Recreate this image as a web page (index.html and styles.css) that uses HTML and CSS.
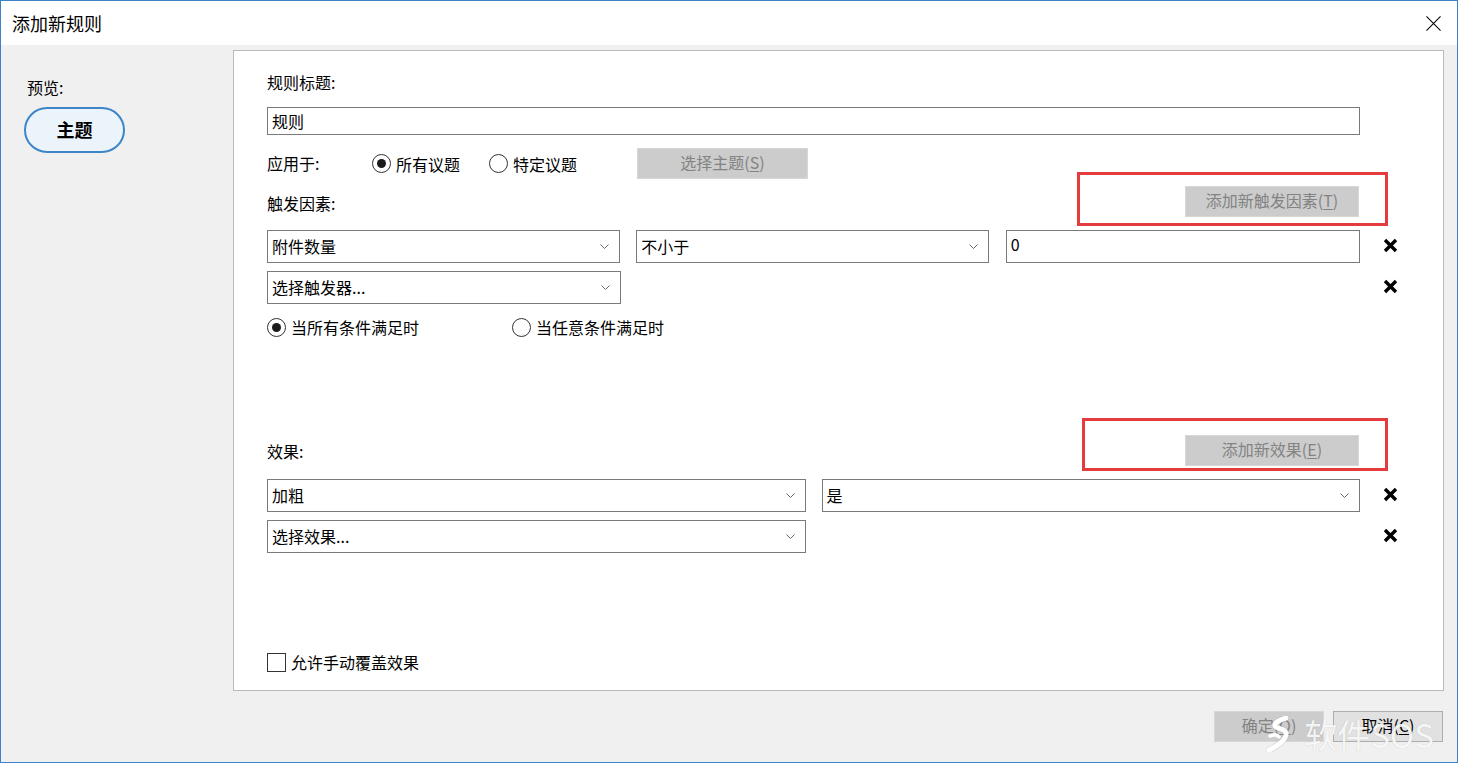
FILE: index.html
```html
<!DOCTYPE html>
<html>
<head>
    <meta charset="utf-8"/>
    <title>添加新规则</title>
    <link rel="stylesheet" href="styles.css">
</head>
<body>
<div class="window">
    <div class="titlebar">
        <span class="title">添加新规则</span>
        <svg class="close" width="16" height="16" viewBox="0 0 16 16">
            <path d="M0.5 0.5L15.5 15.5M15.5 0.5L0.5 15.5" stroke="#000" stroke-width="1.1" fill="none"/>
        </svg>
    </div>

    <div class="client">
        <div class="content">
            <!-- preview column -->
            <div class="preview">
                <div class="preview-label">预览:</div>
                <div class="topic">主题</div>
            </div>

            <!-- rule editor -->
            <div class="panel">
                <div class="label rule-title">规则标题:</div>
                <div class="textbox title-box">规则</div>

                <div class="apply-row">
                    <span class="apply-label">应用于:</span>
                    <span class="opt opt-all"><span class="radio checked"></span>所有议题</span>
                    <span class="opt opt-some"><span class="radio"></span>特定议题</span>
                    <button class="btn disabled pick">选择主题(<u>S</u>)</button>
                </div>

                <div class="section-head trigger-head">
                    <span class="label">触发因素:</span>
                    <div class="highlight">
                        <button class="btn disabled add">添加新触发因素(<u>T</u>)</button>
                    </div>
                </div>

                <div class="row first-row">
                    <div class="fields">
                        <div class="select col-a">附件数量
                            <svg class="chev" width="9" height="5" viewBox="0 0 9 5"><path d="M0.5 0.5L4.5 4.5L8.5 0.5" stroke="#666" fill="none"/></svg>
                        </div>
                        <div class="select col-b">不小于
                            <svg class="chev" width="9" height="5" viewBox="0 0 9 5"><path d="M0.5 0.5L4.5 4.5L8.5 0.5" stroke="#666" fill="none"/></svg>
                        </div>
                        <div class="textbox col-c">0</div>
                    </div>
                    <div class="del"><svg width="15" height="15" viewBox="0 0 15 15"><path d="M2 2L13 13M13 2L2 13" stroke="#000" stroke-width="3.4"/></svg></div>
                </div>
                <div class="row">
                    <div class="fields">
                        <div class="select col-a">选择触发器...
                            <svg class="chev" width="9" height="5" viewBox="0 0 9 5"><path d="M0.5 0.5L4.5 4.5L8.5 0.5" stroke="#666" fill="none"/></svg>
                        </div>
                    </div>
                    <div class="del"><svg width="15" height="15" viewBox="0 0 15 15"><path d="M2 2L13 13M13 2L2 13" stroke="#000" stroke-width="3.4"/></svg></div>
                </div>

                <div class="cond-row">
                    <span class="opt opt-any"><span class="radio checked"></span>当所有条件满足时</span>
                    <span class="opt"><span class="radio"></span>当任意条件满足时</span>
                </div>

                <div class="section-head effect-head">
                    <span class="label">效果:</span>
                    <div class="highlight">
                        <button class="btn disabled add">添加新效果(<u>E</u>)</button>
                    </div>
                </div>

                <div class="row first-row">
                    <div class="fields">
                        <div class="select col-wide">加粗
                            <svg class="chev" width="9" height="5" viewBox="0 0 9 5"><path d="M0.5 0.5L4.5 4.5L8.5 0.5" stroke="#666" fill="none"/></svg>
                        </div>
                        <div class="select col-wide">是
                            <svg class="chev" width="9" height="5" viewBox="0 0 9 5"><path d="M0.5 0.5L4.5 4.5L8.5 0.5" stroke="#666" fill="none"/></svg>
                        </div>
                    </div>
                    <div class="del"><svg width="15" height="15" viewBox="0 0 15 15"><path d="M2 2L13 13M13 2L2 13" stroke="#000" stroke-width="3.4"/></svg></div>
                </div>
                <div class="row">
                    <div class="fields">
                        <div class="select col-wide">选择效果...
                            <svg class="chev" width="9" height="5" viewBox="0 0 9 5"><path d="M0.5 0.5L4.5 4.5L8.5 0.5" stroke="#666" fill="none"/></svg>
                        </div>
                    </div>
                    <div class="del"><svg width="15" height="15" viewBox="0 0 15 15"><path d="M2 2L13 13M13 2L2 13" stroke="#000" stroke-width="3.4"/></svg></div>
                </div>

                <div class="check-row">
                    <span class="checkbox"></span>允许手动覆盖效果
                </div>
            </div>
        </div>

        <div class="footer">
            <button class="btn disabled dlg">确定(<u>O</u>)</button>
            <button class="btn dlg">取消(<u>C</u>)</button>
        </div>
    </div>

    <div class="watermark">
        <svg class="wm-logo" width="26" height="36" viewBox="0 0 26 36">
            <path d="M20 2C13 4 8 7 9 10C10 13 19 12 20 17C21 23 12 30 3 34" stroke="rgba(0,0,0,0.08)" stroke-width="6.5" fill="none" stroke-linecap="round"/>
            <path d="M20 2C13 4 8 7 9 10C10 13 19 12 20 17C21 23 12 30 3 34" stroke="#fff" stroke-width="5" fill="none" stroke-linecap="round"/>
            <path d="M4 20C8 18 12 19 13 21" stroke="#fff" stroke-width="3.5" fill="none" stroke-linecap="round"/>
        </svg>
        <span class="wm-text">软件SOS</span>
    </div>
</div>
</body>
</html>
```

FILE: styles.css
```css
* {
    box-sizing: border-box;
}

body {
    margin: 0;
    font-family: "Noto Sans CJK SC", "Noto Sans", sans-serif;
    font-size: 16px;
    color: #000;
    background: #f0f0f0;
}

u {
    text-decoration: underline;
    text-underline-offset: 2px;
}

/* window frame */
.window {
    position: relative;
    width: 1458px;
    height: 763px;
    border: 1px solid #3c82c8;
    background: #f0f0f0;
    display: flex;
    flex-direction: column;
    overflow: hidden;
}

.titlebar {
    height: 44px;
    background: #fff;
    display: flex;
    align-items: center;
    justify-content: space-between;
    padding: 0 16px 0 11px;
}

.title {
    font-size: 18px;
    line-height: 20px;
}

.close {
    width: 15px;
    height: 15px;
}

.client {
    flex: 1;
    padding: 5px 13px 0 0;
}

.content {
    display: flex;
}

/* preview */
.preview {
    width: 232px;
}

.preview-label {
    margin: 27px 0 0 26px;
    line-height: 20px;
}

.topic {
    margin: 10px 0 0 23px;
    width: 101px;
    height: 46px;
    border: 2px solid #3d85c6;
    border-radius: 23px;
    background: #ebf3fb;
    display: flex;
    align-items: center;
    justify-content: center;
    padding-bottom: 2px;
    font-size: 18px;
    font-weight: bold;
}

/* panel */
.panel {
    width: 1211px;
    height: 641px;
    background: #fff;
    border: 1px solid #bababa;
    padding-left: 33px;
}

.label {
    line-height: 20px;
}

.rule-title {
    margin-top: 21px;
}

.textbox {
    border: 1px solid #7a7a7a;
    background: #fff;
    padding: 0 0 1px 4px;
    display: flex;
    align-items: center;
}

.title-box {
    margin-top: 15px;
    width: 1093px;
    height: 28px;
}

.apply-row {
    margin-top: 13px;
    height: 31px;
    display: flex;
    align-items: center;
}

.apply-label {
    width: 105px;
    padding-bottom: 2px;
}

.opt {
    display: flex;
    align-items: center;
    line-height: 20px;
}

.opt-all {
    width: 117px;
}

.opt-some {
    width: 148px;
}

.radio {
    width: 19px;
    height: 19px;
    border: 1px solid #333;
    border-radius: 50%;
    margin-right: 5px;
    display: flex;
    align-items: center;
    justify-content: center;
    background: #fff;
}

.radio.checked::after {
    content: "";
    width: 9px;
    height: 9px;
    border-radius: 50%;
    background: #1a1a1a;
}

.btn {
    height: 31px;
    font-family: inherit;
    font-size: 16px;
    line-height: 20px;
    border: 1px solid #adadad;
    background: #e1e1e1;
    color: #000;
    padding: 0 0 3px;
}

.btn.disabled {
    background: #cccccc;
    border-color: #d7d7d7;
    color: #838383;
}

.pick {
    width: 171px;
}

/* section heads with red markers */
.section-head {
    width: 1121px;
    display: flex;
    justify-content: space-between;
    align-items: flex-start;
}

.highlight {
    border: 3px solid #e43c3e;
    display: flex;
    justify-content: flex-end;
}

.add {
    width: 174px;
}

.trigger-head .label {
    margin-top: 14px;
}

.trigger-head .highlight {
    margin-top: -7px;
    width: 311px;
    height: 54px;
    padding: 11px 26px 0 0;
}

.effect-head {
    margin-top: 81px;
}

.effect-head .label {
    margin-top: 23px;
}

.effect-head .highlight {
    width: 306px;
    height: 53px;
    padding: 14px 26px 0 0;
}

/* rows */
.row {
    margin-top: 8px;
    display: flex;
    align-items: center;
}

.trigger-head + .first-row {
    margin-top: 4px;
}

.fields {
    width: 1093px;
    display: flex;
    gap: 16px;
}

.select {
    height: 33px;
    border: 1px solid #7a7a7a;
    background: #fff;
    padding: 0 10px 2px 4px;
    display: flex;
    align-items: center;
    justify-content: space-between;
}

.chev {
    margin-top: 2px;
}

.col-a {
    width: 354px;
}

.col-b {
    width: 353px;
}

.col-c {
    width: 355px;
    height: 33px;
    margin-left: 1px;
    padding-bottom: 5px;
}

.col-wide {
    width: 539px;
}

.del {
    width: 60px;
    display: flex;
    justify-content: center;
    padding-bottom: 3px;
}

.cond-row {
    margin-top: 13px;
    height: 20px;
    display: flex;
}

.opt-any {
    width: 245px;
}

.check-row {
    margin-top: 99px;
    display: flex;
    align-items: center;
    line-height: 20px;
}

.checkbox {
    width: 19px;
    height: 19px;
    border: 1px solid #333;
    background: #fff;
    margin-right: 5px;
}

/* dialog buttons */
.footer {
    display: flex;
    justify-content: flex-end;
    gap: 9px;
    padding: 20px 1px 0 0;
}

.dlg {
    width: 110px;
}

/* watermark laid over the corner */
.watermark {
    position: absolute;
    right: 23px;
    bottom: 10px;
    display: flex;
    align-items: center;
    gap: 12px;
    pointer-events: none;
}

.wm-text {
    color: rgba(255, 255, 255, 0.88);
    font-size: 33px;
    line-height: 36px;
    text-shadow: 0 0 1px rgba(0, 0, 0, 0.2);
}
```
